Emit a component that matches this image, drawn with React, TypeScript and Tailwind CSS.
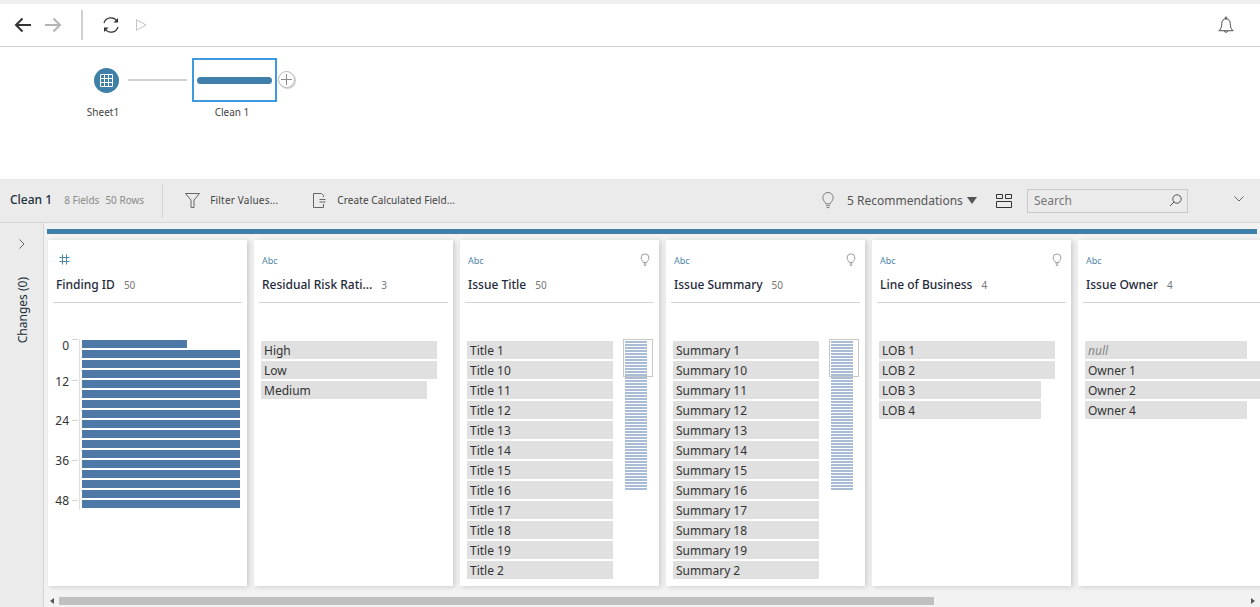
const font = "font-['Noto_Sans',sans-serif]";

interface Field {
  name: string;
  count: number;
  kind: "num" | "abc";
  hint?: boolean;
}

const titles = ["1", "10", "11", "12", "13", "14", "15", "16", "17", "18", "19", "2"];
const histBars = Array.from({ length: 17 }, (_, i) => i);

function Bulb({ className }: { className?: string }) {
  return (
    <svg viewBox="0 0 14 18" className={className} fill="none" stroke="currentColor" strokeWidth="1">
      <path d="M4.5 12.5 C4.5 10.5 1.5 9.5 1.5 6 A5.5 5.5 0 0 1 12.5 6 C12.5 9.5 9.5 10.5 9.5 12.5 Z" />
      <path d="M5 14.5 H9 M5.5 16.5 H8.5" />
    </svg>
  );
}

function CardHead({ name, count, kind, hint }: Field) {
  return (
    <div className="mx-[5px] h-[63px] border-b border-[#d4d4d4] relative">
      <div className="h-[38px] pt-[15px] pl-[3px] flex items-start justify-between">
        {kind === "num" ? (
          <svg viewBox="0 0 11 11" className="w-[11px] h-[11px] ml-[3px] -mt-px text-[#4f87a8]" stroke="currentColor" strokeWidth="1">
            <path d="M3.5 0.5 V10.5 M7.5 0.5 V10.5 M0.5 3.5 H10.5 M0.5 7.5 H10.5" />
          </svg>
        ) : (
          <span className="text-[9px] leading-[12px] text-[#4f87a8]">Abc</span>
        )}
        {hint && <Bulb className="w-[10px] h-[14px] mr-[4px] -mt-[2px] text-[#777]" />}
      </div>
      <div className="pl-[3px] flex items-baseline">
        <span className="text-[12px] leading-[14px] font-medium text-[#1f2a3a]">{name}</span>
        <span className="ml-[9px] text-[10px] text-[#777]">{count}</span>
      </div>
    </div>
  );
}

function Card({ field, children }: { field: Field; children?: React.ReactNode }) {
  return (
    <div className="w-[199px] h-[346px] shrink-0 bg-white shadow-[2px_1px_5px_rgba(0,0,0,0.16)] overflow-hidden relative">
      <CardHead {...field} />
      {children}
    </div>
  );
}

function ValueRows({ rows }: { rows: { label: string; w: string; italic?: boolean }[] }) {
  return (
    <div className="pt-[38px] pl-[7px] flex flex-col gap-[2px]">
      {rows.map((r) => (
        <div key={r.label} className={`h-[18px] bg-[#e0e0e0] pl-[3px] text-[12px] leading-[19px] whitespace-nowrap ${r.w} ${r.italic ? "italic text-[#888]" : "text-[#333]"}`}>
          {r.label}
        </div>
      ))}
    </div>
  );
}

function LongList({ prefix }: { prefix: string }) {
  return (
    <div className="flex">
      <ValueRows rows={titles.map((t) => ({ label: `${prefix} ${t}`, w: "w-[146px]" }))} />
      <div className="relative ml-[12px] mt-[38px] w-[22px] flex flex-col gap-px h-[149px]">
        {Array.from({ length: 50 }, (_, i) => (
          <div key={i} className="h-[2px] shrink-0 bg-[#a8bcd6]" />
        ))}
        <div className="absolute -left-[2px] -top-[2px] w-[30px] h-[38px] border border-[#c8c8c8]" />
      </div>
    </div>
  );
}

function Histogram() {
  return (
    <svg width="199" height="215" className="block">
      <line x1="31.5" x2="31.5" y1="36" y2="207" stroke="#e0e0e0" strokeWidth="1" />
      {[36, 77, 117, 157, 197].map((y) => (
        <line key={y} x1="24" x2="30" y1={y + 0.5} y2={y + 0.5} stroke="#d4d4d4" />
      ))}
      {[
        [0, 47],
        [12, 83],
        [24, 122],
        [36, 162],
        [48, 202],
      ].map(([v, y]) => (
        <text key={v} x="21" y={y} textAnchor="end" fontSize="12" fill="#333">
          {v}
        </text>
      ))}
      {histBars.map((i) => (
        <rect key={i} x="34" y={37 + i * 10} width={i === 0 ? 105 : 158} height="8" fill="#4e79a7" />
      ))}
    </svg>
  );
}

export default function App() {
  return (
    <div className={`${font} w-screen h-screen overflow-hidden flex flex-col bg-white`}>
      <div className="h-[4px] bg-[#f0f0f0]" />

      {/* toolbar */}
      <div className="h-[43px] border-b border-[#d4d4d4] flex items-center pl-[14px] pr-[25px]">
        <svg viewBox="0 0 18 16" className="w-[18px] h-[16px] text-[#333]" fill="none" stroke="currentColor" strokeWidth="2">
          <path d="M17 8 H2 M8.5 1.5 L2 8 L8.5 14.5" />
        </svg>
        <svg viewBox="0 0 18 16" className="w-[18px] h-[16px] ml-[12px] text-[#b5b5b5]" fill="none" stroke="currentColor" strokeWidth="2">
          <path d="M1 8 H16 M9.5 1.5 L16 8 L9.5 14.5" />
        </svg>
        <div className="w-[2px] h-[30px] bg-[#d0d0d0] ml-[19px]" />
        <svg viewBox="0 0 18 18" className="w-[18px] h-[18px] ml-[19px] text-[#333]" fill="none" stroke="currentColor" strokeWidth="1.2">
          <path d="M2 7 A7.3 7.3 0 0 1 15 5" />
          <path d="M16 11 A7.3 7.3 0 0 1 3 13" />
          <path d="M16 2 V6.5 H11.5 Z M2 16 V11.5 H6.5 Z" fill="currentColor" stroke="none" />
        </svg>
        <svg viewBox="0 0 11 12" className="w-[11px] h-[12px] ml-[16px] text-[#c4c4c4]" fill="none" stroke="currentColor">
          <path d="M0.5 0.7 L10 6 L0.5 11.3 Z" />
        </svg>
        <svg viewBox="0 0 18 20" className="w-[18px] h-[19px] ml-auto text-[#444]" fill="none" stroke="currentColor">
          <path d="M1.5 15.5 C4 13.5 4.5 11 4.5 8 C4.5 5 6.5 3 9 3 C11.5 3 13.5 5 13.5 8 C13.5 11 14 13.5 16.5 15.5 Z" />
          <path d="M7.2 16 A2 2 0 0 0 10.8 16" />
          <circle cx="9" cy="2" r="1" />
        </svg>
      </div>

      {/* flow canvas */}
      <div className="h-[132px] relative text-[10px] text-[#444]">
        <div className="absolute left-[94px] top-[21px] w-[25px] h-[25px] rounded-full bg-[#3f80a8] flex items-center justify-center">
          <svg viewBox="0 0 13 13" className="w-[13px] h-[13px]" fill="none" stroke="#fff" strokeWidth="1">
            <path d="M0.5 0.5 H12.5 V12.5 H0.5 Z M0.5 4.5 H12.5 M0.5 8.5 H12.5 M4.5 0.5 V12.5 M8.5 0.5 V12.5" />
          </svg>
        </div>
        <div className="absolute left-[128px] top-[32px] w-[59px] h-[2px] bg-[#cfcfcf]" />
        <div className="absolute left-[192px] top-[11px] w-[85px] h-[44px] border-2 border-[#3d9ade] flex items-center justify-center">
          <div className="w-[75px] h-[7px] rounded-full bg-[#3f7fa9]" />
        </div>
        <div className="absolute left-[278px] top-[24px] w-[17px] h-[17px] rounded-full border border-[#b5b5b5] shadow-[1px_1px_1px_rgba(0,0,0,0.2)] flex items-center justify-center">
          <svg viewBox="0 0 11 11" className="w-[11px] h-[11px]" stroke="#8a8a8a">
            <path d="M5.5 0 V11 M0 5.5 H11" />
          </svg>
        </div>
        <div className="absolute left-[63px] w-[80px] top-[58px] text-center">Sheet1</div>
        <div className="absolute left-[192px] w-[80px] top-[58px] text-center">Clean 1</div>
      </div>

      {/* step header */}
      <div className="h-[44px] bg-[#ebebeb] border-b border-[#d4d4d4] flex items-center pl-[10px] text-[#444]">
        <span className="text-[12px] font-medium text-[#22303c] -mt-px">Clean 1</span>
        <span className="ml-[12px] text-[10px] text-[#8a8a8a]">8 Fields</span>
        <span className="ml-[6px] text-[10px] text-[#8a8a8a]">50 Rows</span>
        <div className="w-px h-[34px] bg-[#d4d4d4] ml-[18px]" />
        <svg viewBox="0 0 15 15" className="w-[15px] h-[15px] ml-[22px] text-[#666]" fill="none" stroke="currentColor">
          <path d="M0.5 0.5 H14.5 L9 7 V14.5 H6 V7 Z" />
        </svg>
        <span className="ml-[10px] text-[10px] tracking-[0.2px]">Filter Values...</span>
        <svg viewBox="0 0 13 15" className="w-[13px] h-[15px] ml-[35px] text-[#666]" fill="none" stroke="currentColor">
          <path d="M8.5 0.5 H0.5 V14.5 H10.5 V11 M8.5 0.5 L10.5 2.5 V4 M6.5 6.5 H12.5 M6.5 9 H12.5" />
        </svg>
        <span className="ml-[11px] text-[10px] tracking-[0.1px]">Create Calculated Field...</span>
        <Bulb className="w-[14px] h-[17px] ml-auto text-[#777]" />
        <span className="ml-[12px] text-[12px] text-[#555] w-[114px] whitespace-nowrap">5 Recommendations</span>
        <svg viewBox="0 0 10 7" className="w-[10px] h-[7px] ml-[6px] text-[#555]" fill="currentColor">
          <path d="M0 0 H10 L5 7 Z" />
        </svg>
        <svg viewBox="0 0 16 14" className="w-[16px] h-[14px] ml-[19px] text-[#333]" fill="none" stroke="currentColor">
          <path d="M0.5 0.5 H6.5 V4.5 H0.5 Z M9.5 0.5 H15.5 V4.5 H9.5 Z M0.5 7.5 H15.5 V13.5 H0.5 Z" />
        </svg>
        <div className="ml-[15px] w-[161px] h-[24px] border border-[#c8c8c8] flex items-center justify-between pl-[6px] pr-[5px]">
          <span className="text-[12px] text-[#777]">Search</span>
          <svg viewBox="0 0 13 13" className="w-[13px] h-[13px] text-[#555]" fill="none" stroke="currentColor">
            <circle cx="8" cy="5" r="4.2" />
            <path d="M5 8 L1 12" />
          </svg>
        </div>
        <svg viewBox="0 0 10 6" className="w-[10px] h-[6px] ml-[46px] mr-[16px] -mt-[4px] text-[#666]" fill="none" stroke="currentColor">
          <path d="M0.5 0.5 L5 5 L9.5 0.5" />
        </svg>
      </div>

      {/* profile pane */}
      <div className="flex-1 flex min-h-0">
        <div className="w-[44px] shrink-0 bg-[#ebebeb] border-r border-[#d4d4d4] flex flex-col items-center">
          <svg viewBox="0 0 6 10" className="w-[6px] h-[10px] mt-[16px] text-[#666]" fill="none" stroke="currentColor">
            <path d="M0.5 0.5 L5 5 L0.5 9.5" />
          </svg>
          <span className="mt-[28px] ml-[3px] text-[12px] leading-[14px] text-[#22303c] [writing-mode:vertical-rl] rotate-180">Changes (0)</span>
        </div>
        <div className="flex-1 min-w-0 bg-[#f2f2f2] overflow-hidden">
          <div className="ml-[3px] mt-[6px] w-[1210px] h-[5px] bg-[#3f80a8]" />
          <div className="ml-[4px] mt-[6px] flex gap-[7px]">
            <Card field={{ name: "Finding ID", count: 50, kind: "num" }}>
              <Histogram />
            </Card>
            <Card field={{ name: "Residual Risk Rati...", count: 3, kind: "abc" }}>
              <ValueRows
                rows={[
                  { label: "High", w: "w-[176px]" },
                  { label: "Low", w: "w-[176px]" },
                  { label: "Medium", w: "w-[166px]" },
                ]}
              />
            </Card>
            <Card field={{ name: "Issue Title", count: 50, kind: "abc", hint: true }}>
              <LongList prefix="Title" />
            </Card>
            <Card field={{ name: "Issue Summary", count: 50, kind: "abc", hint: true }}>
              <LongList prefix="Summary" />
            </Card>
            <Card field={{ name: "Line of Business", count: 4, kind: "abc", hint: true }}>
              <ValueRows
                rows={[
                  { label: "LOB 1", w: "w-[176px]" },
                  { label: "LOB 2", w: "w-[176px]" },
                  { label: "LOB 3", w: "w-[162px]" },
                  { label: "LOB 4", w: "w-[162px]" },
                ]}
              />
            </Card>
            <Card field={{ name: "Issue Owner", count: 4, kind: "abc" }}>
              <ValueRows
                rows={[
                  { label: "null", w: "w-[162px]", italic: true },
                  { label: "Owner 1", w: "w-[176px]" },
                  { label: "Owner 2", w: "w-[176px]" },
                  { label: "Owner 4", w: "w-[162px]" },
                ]}
              />
            </Card>
          </div>
          <div className="mt-[11px] h-[8px] flex items-center pl-[6px] pr-[5px]">
            <svg viewBox="0 0 4 6" className="w-[4px] h-[6px] text-[#555]" fill="currentColor">
              <path d="M4 0 V6 L0 3 Z" />
            </svg>
            <div className="ml-[5px] w-[875px] h-[8px] bg-[#c0c0c0]" />
            <svg viewBox="0 0 4 6" className="w-[4px] h-[6px] ml-auto text-[#555]" fill="currentColor">
              <path d="M0 0 V6 L4 3 Z" />
            </svg>
          </div>
        </div>
      </div>
    </div>
  );
}
